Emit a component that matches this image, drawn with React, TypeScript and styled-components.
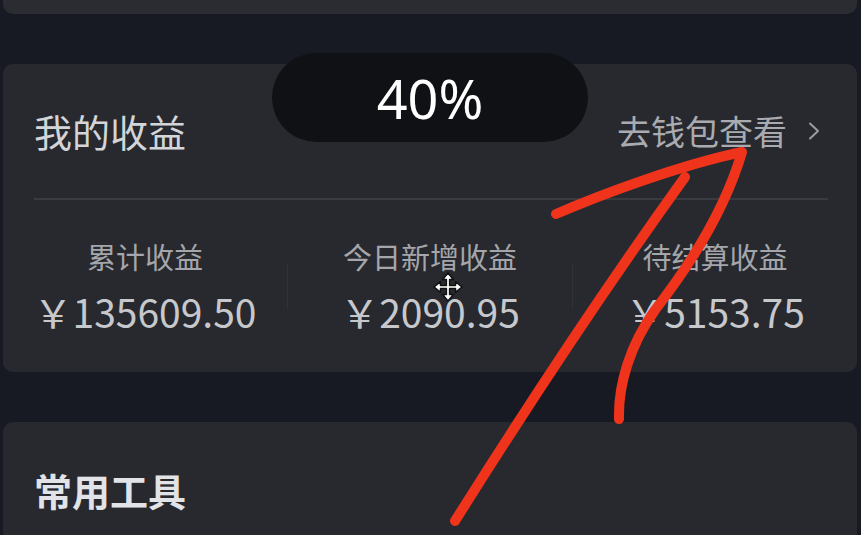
import React from 'react';
import styled, { createGlobalStyle } from 'styled-components';

const GlobalStyle = createGlobalStyle`
  html, body {
    margin: 0;
    padding: 0;
    background: #171a23;
  }
  body {
    font-family: "Noto Sans CJK SC", "Noto Sans", sans-serif;
  }
`;

const Page = styled.div`
  position: relative;
  width: 861px;
  height: 535px;
  overflow: hidden;
  box-sizing: border-box;
  padding: 0 4px 0 3px;
  display: flex;
  flex-direction: column;
  gap: 50px;
  background: #171a23;
`;

const TopCard = styled.div`
  height: 14px;
  flex-shrink: 0;
  background: #2a2c31;
  border-radius: 0 0 10px 10px;
`;

const Card = styled.div`
  background: #27292f;
  border-radius: 10px;
  flex-shrink: 0;
`;

const Header = styled.div`
  height: 134px;
  display: flex;
  align-items: center;
  justify-content: space-between;
  padding: 0 37px 0 31px;
`;

const Title = styled.h2<{ $bold?: boolean }>`
  margin: 0;
  font-size: 38px;
  line-height: 1;
  font-weight: ${(p) => (p.$bold ? 700 : 400)};
  color: ${(p) => (p.$bold ? '#e1e3e7' : '#d3d5d9')};
`;

const WalletLink = styled.a`
  display: flex;
  align-items: center;
  gap: 21px;
  font-size: 34px;
  line-height: 1;
  color: #a9abb0;
  text-decoration: none;
`;

const Divider = styled.div`
  height: 2px;
  background: #393b41;
  margin: 0 29px 0 31px;
`;

const Stats = styled.div`
  height: 172px;
  display: flex;
  align-items: center;
`;

const Stat = styled.div`
  flex: 1;
  display: flex;
  flex-direction: column;
  align-items: center;
  gap: 21px;
`;

const StatLabel = styled.span`
  font-size: 29px;
  line-height: 1;
  color: #a4a6ab;
`;

const StatValue = styled.span`
  font-size: 39px;
  line-height: 1;
  color: #c6c8cc;
`;

const Sep = styled.div`
  width: 1px;
  height: 46px;
  background: #30323a;
`;

const ToolsCard = styled(Card)`
  flex: 1;
  padding: 49px 31px 0;
  border-radius: 10px 10px 0 0;
`;

const ZoomToast = styled.div`
  position: absolute;
  left: 272px;
  top: 53px;
  width: 316px;
  height: 89px;
  border-radius: 45px;
  background: #101114;
  display: flex;
  align-items: center;
  justify-content: center;
  font-family: "Noto Sans", sans-serif;
  font-size: 54px;
  color: #ffffff;
`;

const Annotation = styled.svg`
  position: absolute;
  left: 0;
  top: 0;
  pointer-events: none;
`;

const MoveCursor = styled.svg`
  position: absolute;
  left: 433px;
  top: 272px;
`;

const stats = [
  { label: '累计收益', value: '￥135609.50' },
  { label: '今日新增收益', value: '￥2090.95' },
  { label: '待结算收益', value: '￥5153.75' },
];

export default function App() {
  return (
    <>
      <GlobalStyle />
      <Page>
        <TopCard />
        <Card>
          <Header>
            <Title>我的收益</Title>
            <WalletLink>
              去钱包查看
              <svg width="12" height="18" viewBox="0 0 12 18">
                <polyline points="2,1.5 10,9 2,16.5" fill="none" stroke="#9a9ca2" strokeWidth="2" strokeLinecap="round" strokeLinejoin="round" />
              </svg>
            </WalletLink>
          </Header>
          <Divider />
          <Stats>
            {stats.map((s, i) => (
              <React.Fragment key={s.label}>
                {i > 0 && <Sep />}
                <Stat>
                  <StatLabel>{s.label}</StatLabel>
                  <StatValue>{s.value}</StatValue>
                </Stat>
              </React.Fragment>
            ))}
          </Stats>
        </Card>
        <ToolsCard>
          <Title $bold>常用工具</Title>
        </ToolsCard>

        <ZoomToast>40%</ZoomToast>

        <MoveCursor width="30" height="30" viewBox="0 0 28 28">
          <path
            d="M14 1 L19 7 H15.5 V12.5 H21 V9 L27 14 L21 19 V15.5 H15.5 V21 H19 L14 27 L9 21 H12.5 V15.5 H7 V19 L1 14 L7 9 V12.5 H12.5 V7 H9 Z"
            fill="#ffffff"
            stroke="#111111"
            strokeWidth="1.4"
            strokeLinejoin="round"
          />
        </MoveCursor>

        <Annotation width="861" height="535" viewBox="0 0 861 535">
          <g fill="none" stroke="#f0341c" strokeWidth="10" strokeLinecap="round" strokeLinejoin="round">
            <path d="M455 521 Q575 330 685 177" />
            <path d="M556 214 C600 195 680 165 742 152 C725 210 690 265 655 310 C630 345 618 385 619 419" />
          </g>
        </Annotation>
      </Page>
    </>
  );
}
